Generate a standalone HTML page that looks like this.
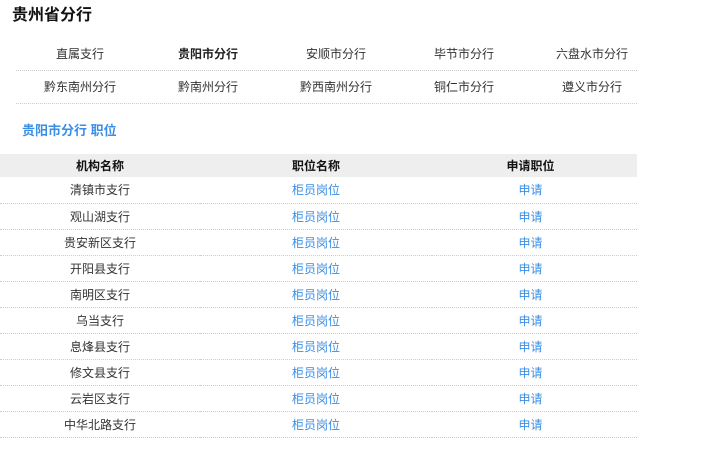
<!DOCTYPE html>
<html><head><meta charset="utf-8"><style>
*{margin:0;padding:0;box-sizing:border-box}
body{width:701px;height:454px;background:#fff;font-family:"Liberation Sans","Noto Sans CJK SC",sans-serif;font-size:12px;color:#333;position:relative;overflow:hidden}
h1{position:absolute;left:12px;top:5px;font-size:16px;font-weight:bold;color:#111;line-height:22px}
.nav{position:absolute;left:16px;top:38px;width:621px}
.nav .row{display:flex;height:33px;border-bottom:1px dotted #ccc;overflow:visible}
.nav .row span{flex:none;width:128px;text-align:center;line-height:32px;color:#333;white-space:nowrap}
.nav .row span.b{font-weight:bold;color:#222}
h2{position:absolute;left:22px;top:122px;font-size:13px;font-weight:bold;color:#3a8ee6;line-height:18px}
table{position:absolute;left:0;top:154px;width:637px;border-collapse:collapse}
th{background:#eee;height:23px;font-weight:bold;color:#111;font-size:12px}
td{height:26px;text-align:center;border-bottom:1px dotted #ccc}
td.l{color:#3a8ee6}
.c3{padding-right:8px}
</style></head><body>
<h1>贵州省分行</h1>
<div class="nav">
<div class="row"><span>直属支行</span><span class="b">贵阳市分行</span><span>安顺市分行</span><span>毕节市分行</span><span>六盘水市分行</span></div>
<div class="row"><span>黔东南州分行</span><span>黔南州分行</span><span>黔西南州分行</span><span>铜仁市分行</span><span>遵义市分行</span></div>
</div>
<h2>贵阳市分行 职位</h2>
<table>
<tr><th style="width:200px">机构名称</th><th style="width:232px">职位名称</th><th class="c3">申请职位</th></tr>
<tr><td>清镇市支行</td><td class="l">柜员岗位</td><td class="l c3">申请</td></tr>
<tr><td>观山湖支行</td><td class="l">柜员岗位</td><td class="l c3">申请</td></tr>
<tr><td>贵安新区支行</td><td class="l">柜员岗位</td><td class="l c3">申请</td></tr>
<tr><td>开阳县支行</td><td class="l">柜员岗位</td><td class="l c3">申请</td></tr>
<tr><td>南明区支行</td><td class="l">柜员岗位</td><td class="l c3">申请</td></tr>
<tr><td>乌当支行</td><td class="l">柜员岗位</td><td class="l c3">申请</td></tr>
<tr><td>息烽县支行</td><td class="l">柜员岗位</td><td class="l c3">申请</td></tr>
<tr><td>修文县支行</td><td class="l">柜员岗位</td><td class="l c3">申请</td></tr>
<tr><td>云岩区支行</td><td class="l">柜员岗位</td><td class="l c3">申请</td></tr>
<tr><td>中华北路支行</td><td class="l">柜员岗位</td><td class="l c3">申请</td></tr>
</table>
</body></html>
